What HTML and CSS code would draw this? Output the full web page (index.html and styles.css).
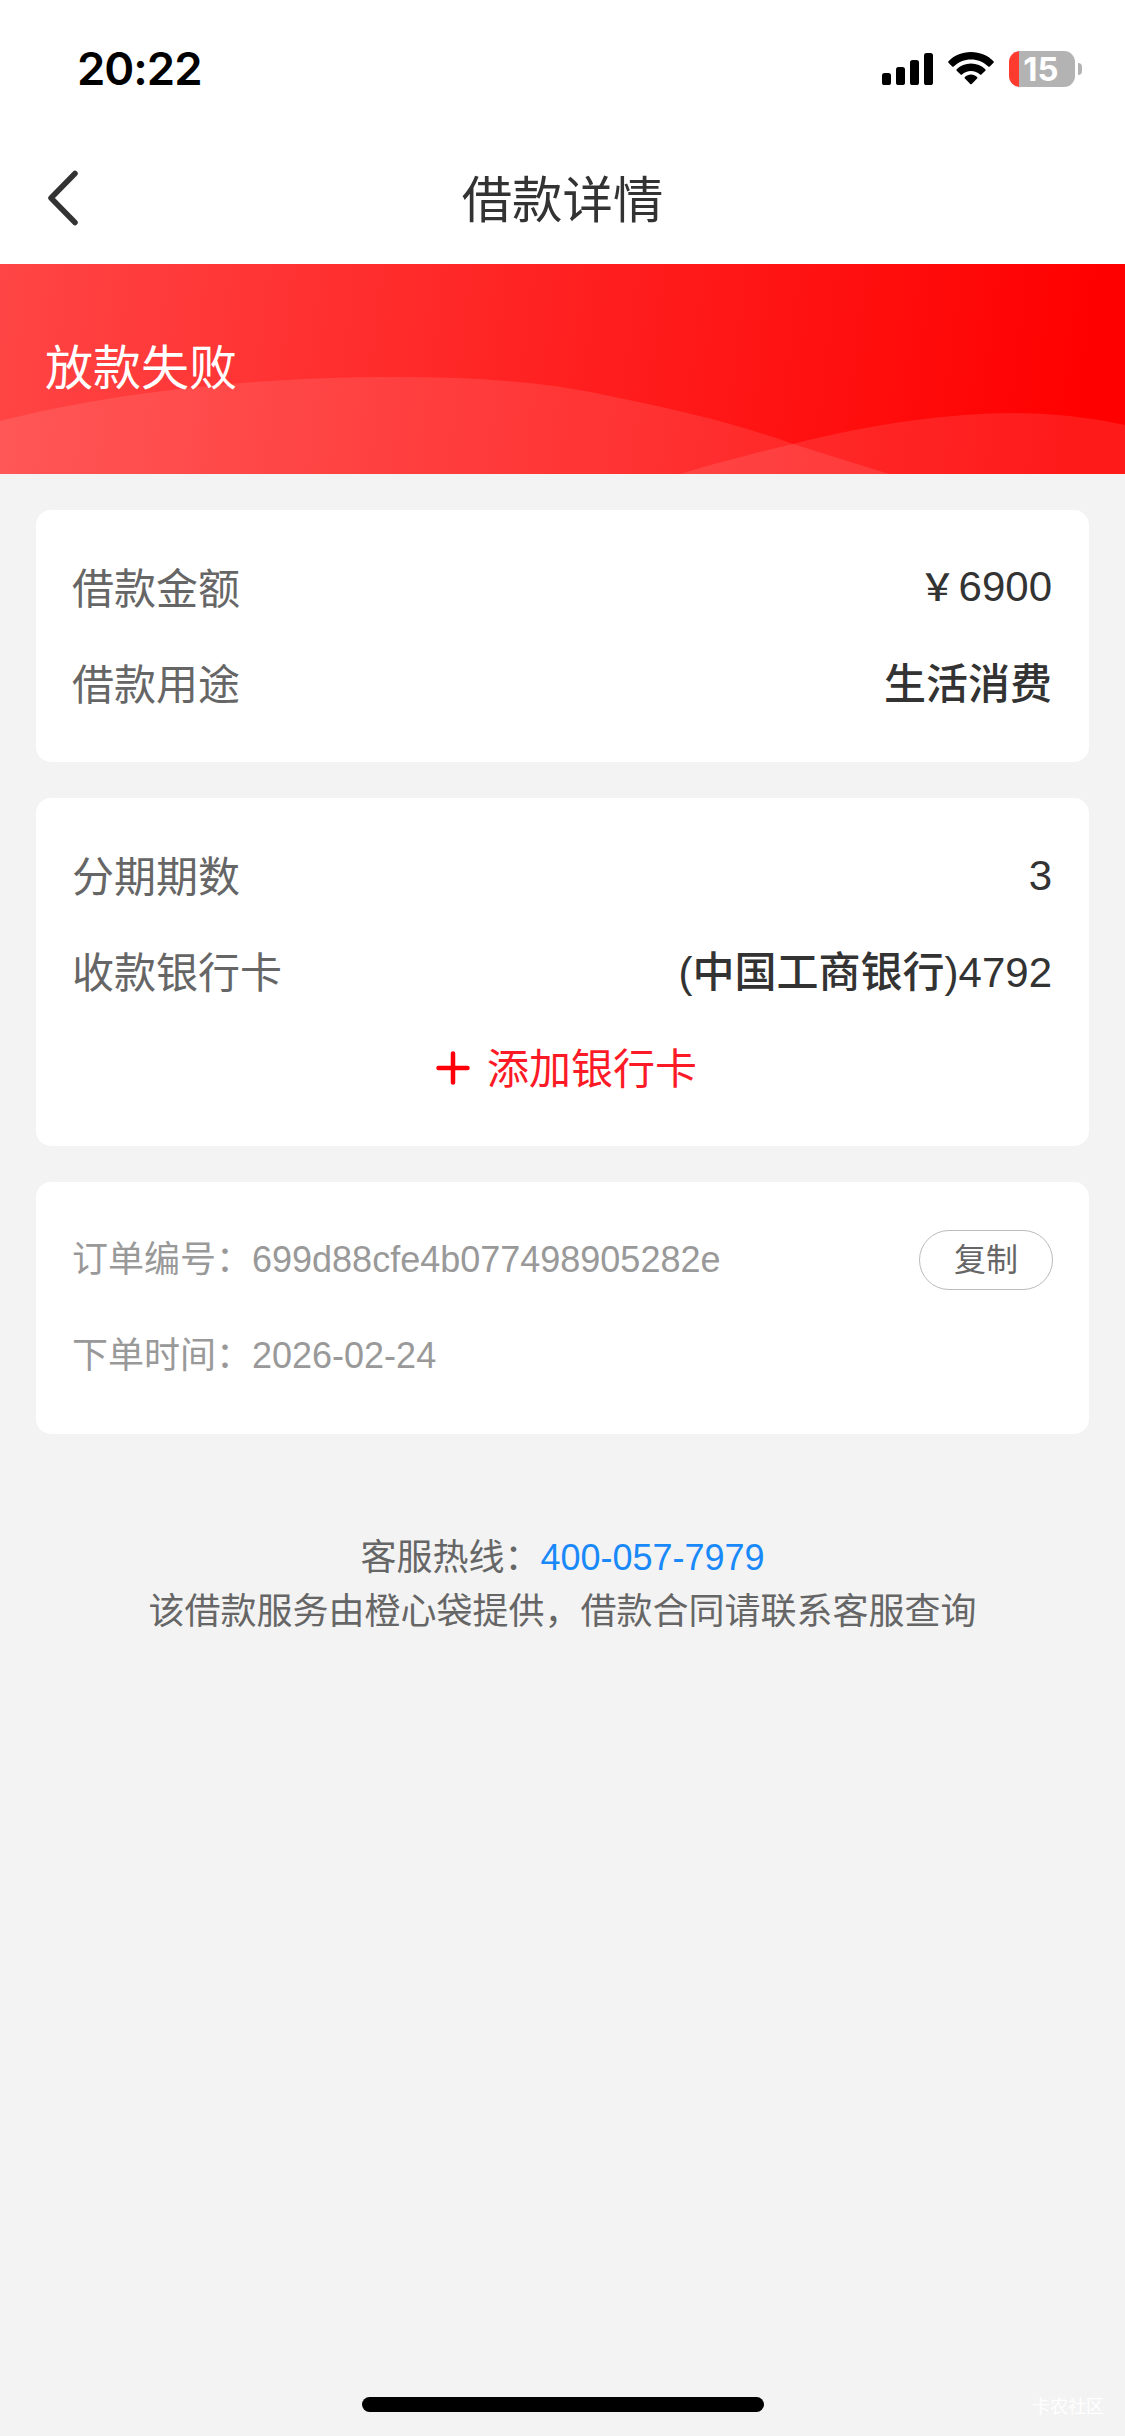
FILE: index.html
```html
<!DOCTYPE html>
<html lang="zh-CN">
<head>
<meta charset="utf-8">
<title>借款详情</title>
<link rel="stylesheet" href="styles.css">
</head>
<body>
<div class="page">
  <header class="header">
    <div class="status-bar">
      <span class="time">20:22</span>
      <div class="indicators">
        <svg class="signal" width="51" height="32" viewBox="0 0 51 32"><rect x="0" y="20" width="9" height="12" rx="2.6"/><rect x="14" y="14" width="9" height="18" rx="2.6"/><rect x="28" y="7" width="9" height="25" rx="2.6"/><rect x="42" y="0" width="9" height="32" rx="2.6"/></svg>
        <svg class="wifi" width="46" height="33" viewBox="0 0 46 33"><path d="M23 0C32 0 40 3.500 45.500 9.200Q46.200 10 45.500 10.700L41.800 14.400Q41 15.100 40.300 14.400C35.600 10 29.600 7.400 23 7.400S10.400 10 5.700 14.400Q5 15.100 4.200 14.400L.5 10.700Q-.2 10 .5 9.200C6 3.500 14 0 23 0Z"/><path d="M23 11.500C28.600 11.500 33.600 13.700 37.300 17.300Q38 18 37.300 18.700L33.400 22.500Q32.700 23.200 32 22.500C29.600 20.300 26.500 18.900 23 18.900S16.400 20.300 14 22.500Q13.300 23.200 12.600 22.500L8.700 18.700Q8 18 8.700 17.300C12.400 13.700 17.400 11.500 23 11.500Z"/><path d="M23 22.600C25.300 22.600 27.500 23.500 29.100 25Q29.900 25.700 29.100 26.500L23.700 32Q23 32.700 22.300 32L16.900 26.500Q16.100 25.700 16.900 25C18.500 23.500 20.700 22.600 23 22.600Z"/></svg>
        <div class="battery"><span class="battery-level">15</span></div>
        <span class="battery-cap"></span>
      </div>
    </div>
    <nav class="nav">
      <svg class="back" width="34" height="58" viewBox="0 0 34 58"><path d="M30 4.500L6 29L30 53.500"/></svg>
      <h1 class="title">借款详情</h1>
    </nav>
  </header>
  <section class="banner">
    <svg class="waves" width="1125" height="210" viewBox="0 0 1125 210"><path d="M0 157C80 136 220 113 395 113C480 113 545 118 605 131C670 144 735 159 793 180L889 210H0Z"/><path d="M680 210C720 198 755 189 793 180C870 160 950 149 1015 149Q1070 149 1125 161V210Z"/></svg>
    <span class="banner-text">放款失败</span>
  </section>
  <main class="cards">
    <section class="card">
      <div class="row"><span class="label">借款金额</span><span class="value"><span class="yuan">￥</span>6900</span></div>
      <div class="row"><span class="label">借款用途</span><span class="value cjk">生活消费</span></div>
    </section>
    <section class="card">
      <div class="row"><span class="label">分期期数</span><span class="value">3</span></div>
      <div class="row"><span class="label">收款银行卡</span><span class="value cjk">(中国工商银行)4792</span></div>
      <div class="row add"><svg width="34" height="34" viewBox="0 0 34 34"><path d="M17 2.500V31.500M2.500 17H31.500"/></svg><span class="add-text">添加银行卡</span></div>
    </section>
    <section class="card">
      <div class="row meta"><span>订单编号：699d88cfe4b077498905282e</span><button class="copy">复制</button></div>
      <div class="row meta"><span>下单时间：2026-02-24</span></div>
    </section>
  </main>
  <footer class="support">
    <p>客服热线：<a class="phone">400-057-7979</a></p>
    <p>该借款服务由橙心袋提供，借款合同请联系客服查询</p>
  </footer>
  <div class="bottom"><span class="home-indicator"></span><span class="watermark">卡农社区</span></div>
</div>
</body>
</html>
```
FILE: styles.css
```css
* { box-sizing: border-box; }
body { margin: 0; background: #f3f3f3; font-family: "Liberation Sans", "Noto Sans CJK SC", sans-serif; color: #333; }
.page { display: flex; flex-direction: column; width: 1125px; height: 2436px; }
.header { height: 264px; background: #fff; }
.status-bar { display: flex; justify-content: space-between; height: 132px; padding: 0 43px 0 77px; }
.time { padding-top: 42px; font: 600 45.5px/54px Inter, sans-serif; letter-spacing: -1px; color: #000; }
.indicators { display: flex; padding-top: 51px; }
.signal { margin-top: 2px; }
.wifi { margin: 1px 15px 0; }
.battery { width: 66px; height: 36px; border-radius: 11px; background: linear-gradient(90deg, #ff3b30 10px, #b3b3b3 10px); text-align: center; color: #fff; font: 700 33px/36px Inter, sans-serif; padding-right: 2px; }
.battery-cap { width: 4px; height: 12px; margin: 12px 0 0 3px; border-radius: 0 6px 6px 0; background: #b3b3b3; }
.nav { display: grid; grid-template-columns: 80px 1fr 80px; align-items: center; height: 132px; padding: 0 45px; }
.back { fill: none; stroke: #333; stroke-width: 5.500; stroke-linecap: round; stroke-linejoin: round; }
.title { margin: 6px 0 0; text-align: center; font-size: 50.4px; line-height: 72px; font-weight: 400; }
.banner { display: grid; align-items: center; height: 210px; background: linear-gradient(97deg, #ff4545 0%, #ff2020 50%, #ff0000 96%); color: #fff; font-size: 48px; }
.waves, .banner-text { grid-area: 1 / 1; }
.waves { fill: #fff; fill-opacity: 0.1; }
.banner-text { padding-left: 45px; line-height: 72px; }
.cards { display: flex; flex-direction: column; gap: 36px; padding: 36px; }
.card { padding: 30px 36px; border-radius: 15px; background: #fff; }
.row { display: flex; align-items: center; justify-content: space-between; height: 96px; font-size: 42px; line-height: 60px; }
.label { padding-top: 3px; color: #666; }
.value { padding-right: 1px; font-weight: 500; }
.value.cjk { padding-top: 2px; }
.yuan { display: inline-block; width: 42px; text-align: center; font-size: 37px; }
.row.add { justify-content: center; gap: 17px; padding-left: 8px; color: #fc1a26; }
.add svg { fill: none; stroke: #ff0008; stroke-width: 4.500; stroke-linecap: round; }
.add-text { padding-top: 3px; }
.row.meta { font-size: 36px; color: #999; }
.copy { width: 134px; height: 60px; padding: 0; border: 1px solid #bbb; border-radius: 30px; background: #fff; color: #666; font-family: inherit; font-size: 32px; line-height: 56px; }
.support { margin-top: 61px; text-align: center; font-size: 36px; line-height: 54px; color: #666; }
.support p { margin: 0; }
.phone { color: #1989fa; }
.bottom { display: grid; grid-template-columns: 1fr 402px 1fr; align-items: center; height: 63px; margin-top: auto; }
.home-indicator { grid-column: 2; height: 15px; border-radius: 8px; background: #000; }
.watermark { justify-self: end; margin-right: 21px; font-size: 18px; color: #fff; }
```
